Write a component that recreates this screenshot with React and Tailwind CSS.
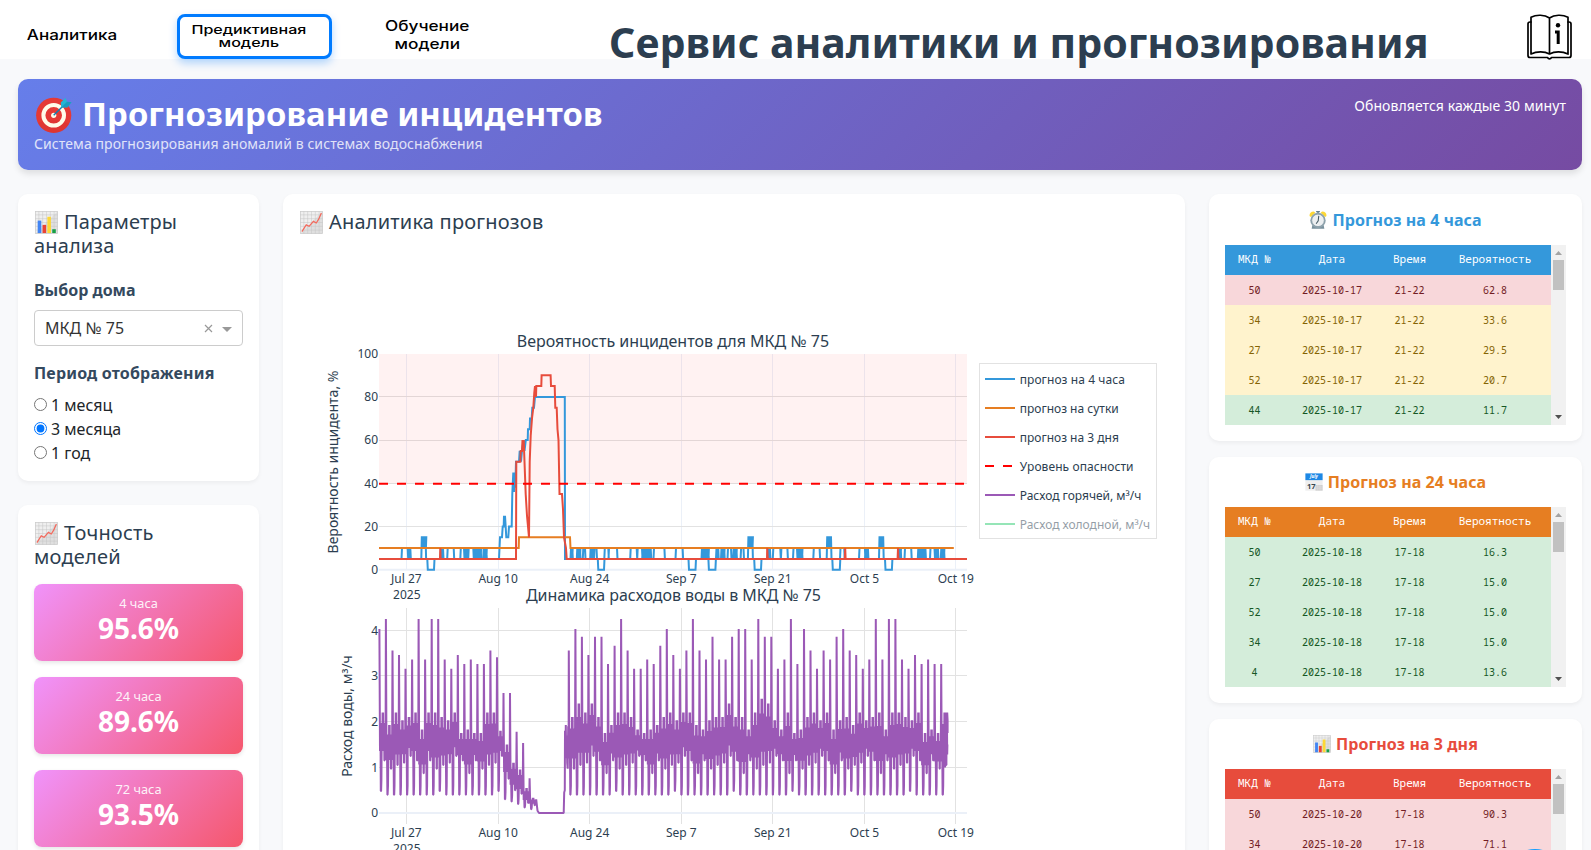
const SANS = "font-['Noto_Sans','Open_Sans',sans-serif]";

/* ---------- probability chart ---------- */
const py = (v) => 569.7 - 2.16 * v;
const ticksX = [
  [406.4, 'Jul 27'], [498.1, 'Aug 10'], [589.7, 'Aug 24'], [681.3, 'Sep 7'],
  [772.8, 'Sep 21'], [864.5, 'Oct 5'], [955.8, 'Oct 19'],
];

// [start, end, level, solid]
const pulses = [
  [402, 407.7, 10], [408.7, 410.3, 10, 1], [421.8, 425.6, 15, 1], [427.8, 434, 0], [441, 443, 10, 1],
  [447.7, 453.7, 10], [460.8, 464, 10], [465, 467.3, 10, 1], [468.7, 473.3, 10], [474.3, 476.7, 10, 1],
  [478, 480.7, 10, 1], [483.7, 486.3, 10, 1],
  'surge',
  [571, 572.3, 10, 1], [577.3, 580, 10, 1], [583.3, 585, 10], [590.7, 593.3, 10, 1], [594.5, 596.5, 10],
  [598.3, 604, 0], [604.8, 608.3, 10], [609, 617, 10], [630.7, 636.7, 10], [637.7, 642, 10],
  [642.7, 646, 10, 1], [647.3, 650.7, 10, 1], [654, 664.4, 10], [676, 682.6, 10], [689, 695.5, 0],
  [702, 705, 10, 1], [705.8, 708.3, 10, 1], [708.9, 715.4, 0], [716.5, 718.2, 10, 1], [721.5, 724.2, 10, 1],
  [728, 731, 10], [733.7, 736.4, 10, 1], [741.1, 743.5, 10], [748.4, 752.4, 15, 1], [754.7, 761, 0],
  [768.2, 769.9, 10, 1], [773.3, 780.3, 10], [781.4, 787.4, 10], [793.5, 797, 10], [798, 802, 10, 1],
  [813.8, 819.6, 10], [827.2, 831, 15, 1], [832.8, 839.8, 0], [840.5, 844.2, 10], [859.5, 864.9, 10],
  [865.5, 867.9, 10, 1], [879.5, 883.2, 15, 1], [885.5, 891.9, 0], [899.3, 900.7, 10, 1], [905, 911.2, 10],
  [918.3, 922, 10, 1], [923, 925.4, 10, 1], [930.5, 934.5, 10], [935.5, 937.9, 10, 1], [941.3, 944, 10, 1],
];
const surge = [
  [499, 5], [500, 15], [502, 15], [502.7, 20], [503.7, 20], [504, 25], [504.8, 20], [505, 25], [506.3, 15],
  [508.3, 15], [509, 20], [511.7, 20], [512.3, 35], [513.3, 45], [514, 36], [514.7, 45], [515.3, 38],
  [516, 50], [518, 50], [519, 50], [519.7, 55], [521, 50], [522, 55], [523.5, 60], [524.5, 55], [525.8, 60],
  [527.7, 60], [528, 65], [529.7, 65], [530, 70], [531.7, 70], [532.3, 75], [534, 75], [535, 80],
  [564.8, 80], [565, 5],
];
const bluePts = [[379, 5]];
pulses.forEach((p) => {
  if (p === 'surge') return bluePts.push(...surge);
  const [a, b, lv, solid] = p;
  const base = lv === 15 ? 10 : 5;
  bluePts.push([a - 0.5, 5], [a, lv]);
  if (solid) for (let x = a + 1; x < b; x += 1.4) bluePts.push([x, lv], [x + 0.3, base], [x + 0.7, lv]);
  bluePts.push([b, lv], [b + 0.5, 5]);
});
bluePts.push([948, 5]);

const redPts = [
  [379, 5], [440, 5], [440.3, 10], [440.6, 5], [516, 5], [516.3, 50], [520.3, 50], [520.7, 55], [522, 55],
  [522.5, 60], [523, 55], [523.7, 60], [524.5, 50], [525.7, 35], [527, 25], [528, 20], [529, 15], [529.7, 50],
  [530.7, 62], [532, 70], [533.3, 75], [534.3, 82], [535, 85], [536, 80], [536.3, 85], [541.3, 85], [541.6, 90],
  [550.6, 90], [551, 85], [554.7, 85], [555.3, 75], [556.7, 75], [557.5, 65], [558.5, 60], [559.5, 35],
  [562, 35], [563, 28], [564, 15], [566, 10], [566.7, 5], [767, 5], [767.2, 10], [767.8, 5], [844.8, 5],
  [845.2, 10], [845.6, 5], [897.6, 5], [898, 10], [898.4, 5], [967, 5],
];
const orangePts = [[379, 10], [518.7, 10], [519, 15], [570, 15], [570.5, 10], [953.8, 10]];
const line = (pts, f) => pts.map(([x, v]) => `${x.toFixed(1)},${f(v).toFixed(1)}`).join(' ');

/* ---------- hot water flow chart ---------- */
const wy = (v) => 813 - 45.67 * v;
const peaks = [
  4.05, 4.27, 3.58, 3.48, 3.18, 3.38, 4.27, 3.38, 4.27, 4.27, 3.38, 3.18, 3.48, 3.28, 3.38, 3.28, 3.28, 3.58,
  3.43, 2.65, 2.65, 1.8, 1.55, 0.78, 0.3, 0, 0, 0, 1.9, 3.58, 4.05, 3.88, 3.48, 3.88, 3.88, 3.28, 3.68, 4.27,
  3.58, 3.18, 3.18, 3.38, 3.28, 3.68, 4.05, 3.48, 3.18, 3.58, 4.27, 3.58, 3.38, 3.88, 3.38, 3.38, 3.88, 4.05,
  4.05, 3.38, 4.27, 3.88, 3.88, 3.18, 3.38, 4.27, 3.28, 4.05, 3.58, 3.18, 3.58, 3.38, 3.88, 4.05, 3.58, 3.48,
  3.18, 3.38, 4.27, 3.38, 4.27, 4.27, 3.38, 3.18, 3.48, 3.28, 3.38, 3.28, 3.28,
];
const highs = [
  2.2, 1.93, 2.2, 2.03, 2.1, 2.2, 1.83, 2.2, 2.2, 2.1, 2.03, 2.2, 1.75, 1.83, 1.75, 1.75, 2.2, 2.2, 1.8, 1.5,
  1.1, 0.95, 0.55, 0.33, 0, 0, 0, 0, 1.93, 2.1, 2.4, 2.2, 2.4, 2.1, 1.75, 1.93, 2.2, 2.2, 2.1, 1.83, 1.75, 1.83,
  1.93, 2.1, 2.2, 2.03, 2.2, 2.2, 1.93, 1.83, 2.03, 2.1, 2.1, 2.4, 2.1, 2.1, 1.83, 2.2, 2.5, 2.4, 2.03, 1.83,
  2.2, 1.75, 1.83, 2.1, 2.2, 2.03, 2.2, 1.83, 2.03, 2.1, 1.93, 2.2, 2.03, 2.1, 2.2, 1.83, 2.2, 2.2, 2.1, 2.03,
  2.2, 1.75, 1.83, 1.75, 2.2,
];
const lows = { 19: [0.3, 0.75], 20: [0.25, 0.5], 21: [0.2, 0.42], 22: [0.12, 0.22], 23: [0.08, 0.17] };
const flow = [];
peaks.forEach((p, k) => {
  const x = 379.4 + 6.532 * k;
  if (k > 24 && k < 28) return;
  if (k === 24) return flow.push([x, 0.3], [537.5, 0.05], [539, 0], [563.7, 0], [564.2, 0.45]);
  if (k === 28) {
    return [[564.8, 0.5], [565, 1.8], [565.4, 1.3], [565.8, 1.93], [566.2, 1.2], [566.7, 1.7], [567.2, 1.1], [567.7, 0.97], [568.2, 1.9], [568.6, 1.3]].forEach((q) => flow.push(q));
  }
  const h = highs[k];
  const [min, low] = lows[k] || [k % 9 === 0 ? 0.48 : 0.4, [1.15, 0.97, 1.05, 1.1, 1.25, 1.15, 0.87][k % 7]];
  const mid = low + (h - low) * 0.2;
  const up = low + (h - low) * 0.78;
  [
    [0, p - 0.02], [0.09, mid], [0.13, up], [0.18, mid], [0.22, min], [0.26, min], [0.31, min * 1.5], [0.34, mid], [0.37, up],
    [0.4, mid], [0.43, up], [0.46, mid], [0.49, h], [0.53, mid], [0.57, h], [0.61, mid], [0.65, up], [0.69, mid],
    [0.72, up], [0.76, low], [0.8, low], [0.83, up], [0.86, mid], [0.89, up], [0.92, mid], [0.95, mid + 0.1 * h],
  ].forEach(([t, v]) => flow.push([x + t * 6.532, v]));
});
flow.push([945, 1], [945.4, 2.2], [945.8, 1.3], [946.3, 2.2], [946.7, 1.7], [947.2, 2.2], [947.6, 2.03], [947.6, 1.75]);

const legend = [
  ['прогноз на 4 часа', '#3498db'], ['прогноз на сутки', '#e67e22'], ['прогноз на 3 дня', '#e74c3c'],
  ['Уровень опасности', '#ff0000'], ['Расход горячей, м³/ч', '#9b59b6'], ['Расход холодной, м³/ч', '#2ecc71'],
];

function Cubic({ text }) {
  const [a, b] = text.split('³');
  if (b === undefined) return text;
  return <>{a}<tspan dy="1.5">³</tspan><tspan dy="-1.5">{b}</tspan></>;
}

function Charts() {
  return (
    <svg className="mt-[6px] block font-['Noto_Sans','Open_Sans',sans-serif]" width="870" height="640" viewBox="299 240 870 640">
      <g stroke="#ebf0f8" strokeWidth="1">
        {ticksX.map(([x]) => <path key={x} d={`M${Math.round(x - 0.5) + 0.5} 354V570`} />)}
      </g>
      <g stroke="#e2e2e2">
        {[20, 40, 60, 80].map((v) => <path key={v} d={`M379 ${Math.floor(py(v)) + 0.5}H967`} />)}
      </g>
      <path d="M379 569.8H967" stroke="#ebf0f8" strokeWidth="2" />
      <rect x="379" y="354" width="588" height="129.5" fill="#ff0000" fillOpacity="0.05" />
      <g fill="none" strokeWidth="2">
        <polyline points={line(bluePts, py)} stroke="#3498db" />
        <polyline points={line(orangePts, py)} stroke="#e67e22" />
        <polyline points={line(redPts, py)} stroke="#e74c3c" />
        <path d="M379 483.7H967" stroke="#ff0000" strokeDasharray="9 9" />
      </g>
      <g stroke="#e2e2e2">
        {ticksX.map(([x]) => <path key={x} d={`M${Math.round(x - 0.5) + 0.5} 608V824`} />)}
        {[1, 2, 3, 4].map((v) => <path key={v} d={`M379 ${Math.floor(wy(v)) + 0.5}H967`} />)}
      </g>
      <path d="M379 813H967" stroke="#ebf0f8" strokeWidth="2" />
      <polyline points={line(flow, wy)} fill="none" stroke="#9b59b6" strokeWidth="2" strokeLinejoin="bevel" />

      <g fill="#2c3e50" fontSize="12">
        {[0, 20, 40, 60, 80, 100].map((v) => <text key={v} x="378" y={py(v) + 4.3} textAnchor="end">{v}</text>)}
        {[0, 1, 2, 3, 4].map((v) => <text key={v} x="378" y={wy(v) + 4.3} textAnchor="end">{v}</text>)}
        {ticksX.map(([x, t]) => (
          <g key={t} textAnchor="middle">
            <text x={x} y="583">{t}</text>
            <text x={x} y="837">{t}</text>
          </g>
        ))}
        <text x="406.8" y="599" textAnchor="middle">2025</text>
        <text x="406.8" y="853" textAnchor="middle">2025</text>
      </g>
      <g fill="#2c3e50" textAnchor="middle" fontSize="16">
        <text x="673" y="347">Вероятность инцидентов для МКД № 75</text>
        <text x="673.5" y="601" textLength="295">Динамика расходов воды в МКД № 75</text>
      </g>
      <g fill="#2c3e50" textAnchor="middle" fontSize="14">
        <text transform="translate(338 462) rotate(-90)" textLength="183">Вероятность инцидента, %</text>
        <text transform="translate(352 716) rotate(-90)"><Cubic text="Расход воды, м³/ч" /></text>
      </g>
      <rect x="979.5" y="363.5" width="177" height="175" fill="#fff" stroke="#e2e2e2" />
      <g fontSize="12" fill="#2c3e50">
        {legend.map(([t, c], i) => (
          <g key={t} opacity={i === 5 ? 0.5 : 1}>
            <path d={`M985 ${379 + 29 * i}H1015`} stroke={c} strokeWidth="2" strokeDasharray={i === 3 ? '9 9' : undefined} />
            <text x="1019.7" y={383.7 + 29 * i} letterSpacing={i === 0 || i === 3 ? 0.08 : 0}><Cubic text={t} /></text>
          </g>
        ))}
      </g>
    </svg>
  );
}

/* ---------- pictograms ---------- */
function SheetGrid() {
  return (
    <>
      <rect x="0.5" y="0.5" width="23" height="23" fill="#efefef" />
      <path d="M0.5 23.500L23.500 0.500V23.500z" fill="#d9d9d9" opacity="0.7" />
      <path d="M4 0V24M8 0V24M12 0V24M16 0V24M20 0V24M0 4H24M0 8H24M0 12H24M0 16H24M0 20H24" stroke="#c4c4c4" strokeWidth="0.5" />
      <rect x="0.5" y="0.5" width="23" height="23" fill="none" stroke="#cccccc" strokeWidth="0.8" />
    </>
  );
}
function BarsIcon({ className }) {
  return (
    <svg className={className} viewBox="0 0 24 24">
      <SheetGrid />
      <path d="M2.800 10H6.600V23H2.800z" fill="#4285f4" />
      <path d="M7.900 14.500H11.600V23H7.900z" fill="#ea4335" />
      <path d="M12.900 6H16.600V23H12.900z" fill="#fdd835" />
      <path d="M18 19H21.700V23H18z" fill="#16a047" />
    </svg>
  );
}
function TrendIcon({ className }) {
  return (
    <svg className={className} viewBox="0 0 24 24">
      <SheetGrid />
      <path d="M2 21.500L6.500 14.500L9.500 16L14 10.800L17 12.500L19.500 8.500L22.300 2" fill="none" stroke="#f4695c" strokeWidth="1.3" />
    </svg>
  );
}
function ClockIcon({ className }) {
  return (
    <svg className={className} viewBox="0 0 24 24">
      <path d="M0.700 6.500Q0.500 1 6.500 0.800L8.500 2.200L2.500 8z" fill="#fdd835" />
      <path d="M23.300 6.500Q23.500 1 17.500 0.800L15.500 2.200L21.500 8z" fill="#fdd835" />
      <path d="M4.500 19H19.500L20.500 23.500H3.500z" fill="#78909c" />
      <circle cx="12" cy="12.500" r="10.300" fill="#90a4ae" />
      <circle cx="12" cy="12.500" r="8.300" fill="#eceff1" stroke="#78909c" strokeWidth="0.8" />
      <path d="M12 0.500V2.500M9.500 0.800H14.500" stroke="#607d8b" strokeWidth="1.800" />
      <path d="M13 6.500L12.300 13L9.500 17" fill="none" stroke="#455a64" strokeWidth="1.400" />
    </svg>
  );
}
function CalendarIcon({ className }) {
  return (
    <svg className={className} viewBox="0 0 24 24">
      <path d="M0.500 9H23.500V23.500H0.500z" fill="#eeeeee" />
      <path d="M14 16H23.500V23.500H14z" fill="#cfcfcf" />
      <path d="M14 18.500H23.500M14 21H23.500M17 16V23.500M20 16V23.500" stroke="#e8e8e8" strokeWidth="0.500" />
      <path d="M0.500 0.500H23.500V9.500H0.500z" fill="#1e88e5" />
      <text x="12" y="7" textAnchor="middle" fontSize="6" fontWeight="700" fontStyle="italic" fill="#fff">July</text>
      <text x="8.500" y="21.300" textAnchor="middle" fontSize="10" fontWeight="700" fill="#37474f">17</text>
    </svg>
  );
}
function TargetIcon({ className }) {
  return (
    <svg className={className} viewBox="0 0 36 36">
      <circle cx="17.700" cy="18.300" r="17.600" fill="#e53935" />
      <path d="M2 26A17.600 17.600 0 0 0 33 27Q18 20 2 26z" fill="#d32f2f" opacity="0.350" />
      <circle cx="17.700" cy="18.300" r="10.300" fill="none" stroke="#fffbe9" strokeWidth="4" />
      <circle cx="17.700" cy="18.300" r="2.600" fill="#fffbe9" />
      <path d="M17.700 18.300L28 8" stroke="#0e7fb5" strokeWidth="1.400" />
      <path d="M25.300 10.500L24.800 5.500L29.500 0.700L31 4.700L35.500 5.300L31.500 10.200z" fill="#26b5d3" />
      <path d="M25.300 10.500L31 4.700L35.500 5.300L31.500 10.200z" fill="#1c9ac0" />
    </svg>
  );
}
function Book() {
  return (
    <svg className="h-[46px] w-[45px]" viewBox="0 0 45 46" fill="none" stroke="#000" strokeWidth="1.7" strokeLinejoin="round" strokeLinecap="round">
      <path d="M22.5 4C17.5 0.6 9.5 0.4 4 3.2V40C10 37 17.5 37.2 22.5 40C27.5 37.2 35 37 41 40V3.2C35.500 0.400 27.500 0.600 22.500 4V40" />
      <path d="M4 8H3C1.700 8 1 8.700 1 10V41.500C1 42.700 1.700 43.500 3 43.500H20.500C21.500 45.300 23.500 45.300 24.500 43.500H42C43.300 43.500 44 42.700 44 41.500V10C44 8.700 43.300 8 42 8H41" />
      <path d="M28 18H31.200V30" strokeWidth="3" strokeLinecap="butt" strokeLinejoin="miter" />
      <circle cx="31" cy="11.300" r="2.200" fill="#000" stroke="none" />
    </svg>
  );
}

/* ---------- forecast tables ---------- */
const tone = {
  r: 'bg-[#f8d7da] text-[#721c24]',
  y: 'bg-[#fff3cd] text-[#856404]',
  g: 'bg-[#d4edda] text-[#155724]',
};
const grid = 'grid h-[30px] grid-cols-[59px_96px_59px_112px] items-center text-center';

function Forecast({ Icon, title, color, head, date, time, rows, box }) {
  return (
    <section className={`shrink-0 rounded-[10px] bg-white px-4 pt-4 shadow-[0_2px_4px_rgba(0,0,0,0.05)] ${box}`}>
      <h3 className={`flex h-[18px] items-center justify-center gap-[5px] text-[16px] leading-[18px] font-bold ${color}`}>
        <Icon className="h-[18px] w-[18px]" />
        <span className="mb-px tracking-[0.08px]">{title}</span>
      </h3>
      <div className="mt-4 flex h-[180px] overflow-hidden font-['Noto_Sans_Mono','Droid_Sans_Mono',monospace]">
        <div className="w-[326px]">
          <div className={`${grid} pb-px text-[11px] text-white ${head}`}>
            <span>МКД №</span><span>Дата</span><span>Время</span><span>Вероятность</span>
          </div>
          {rows.map(([id, p, t]) => (
            <div key={id} className={`${grid} text-[10px] ${tone[t]}`}>
              <span>{id}</span><span>{date}</span><span>{time}</span><span>{p}</span>
            </div>
          ))}
        </div>
        <div className="flex w-[15px] flex-col items-center bg-[#f1f1f1]">
          <svg className="h-[15px] w-[15px]" viewBox="0 0 15 15"><path d="M4 10L7.5 6L11 10z" fill="#a3a3a3" /></svg>
          <div className="h-[30px] w-[11px] bg-[#c1c1c1]" />
          <div className="flex-1" />
          <svg className="h-[15px] w-[15px]" viewBox="0 0 15 15"><path d="M4 5L7.5 9L11 5z" fill="#505050" /></svg>
        </div>
      </div>
    </section>
  );
}

const shadow = 'shadow-[0_2px_4px_rgba(0,0,0,0.05)]';
const inlineIcon = 'mr-[6px] ml-[1px] inline-block h-[23px] w-[23px] align-[-5px]';

export default function App() {
  return (
    <div className={`relative h-[850px] w-[1591px] overflow-hidden bg-[#f8f9fb] text-[#2c3e50] ${SANS}`}>
      <header className="flex h-[59px] bg-white">
        <nav className="flex font-['Inter',sans-serif] text-center text-black">
          <div className="flex h-[59px] w-[144px] items-center justify-center pt-[9px] text-[14px] font-medium">
            <span className="inline-block scale-x-[1.22]">Аналитика</span>
          </div>
          <div className="mt-[14px] ml-[33px] flex h-[45px] w-[155px] items-center justify-center rounded-[8px] border-[3px] border-[#007bff] bg-white pr-[11px] pb-[1px] text-[12px] leading-[13.5px] font-medium shadow-[0_4px_8px_rgba(0,123,255,0.3)]">
            <span className="inline-block scale-x-[1.34]">Предиктивная<br />модель</span>
          </div>
          <div className="mt-[12px] ml-[20px] flex h-[45px] w-[150px] items-center justify-center text-[14px] leading-[18px] font-medium">
            <span className="inline-block scale-x-[1.23]">Обучение<br />модели</span>
          </div>
        </nav>
        <h1 className="ml-[107px] h-[59px] w-[840px] pt-[12px] text-[41px] leading-[60px] font-bold tracking-[0.04px] whitespace-nowrap">Сервис аналитики и прогнозирования</h1>
        <div className="mt-[13.5px] mr-[19px] ml-auto"><Book /></div>
      </header>

      <div className="px-[18px] pt-5 pr-[9px]">
        <div className="flex h-[91px] justify-between rounded-[10px] bg-[linear-gradient(135deg,#667eea_0%,#764ba2_100%)] px-4 pt-4 text-white shadow-[0_4px_6px_rgba(0,0,0,0.1)]">
          <div>
            <h2 className="flex h-[38px] items-center text-[32.8px] leading-[38px] font-bold tracking-[0.06px] whitespace-nowrap">
              <TargetIcon className="mt-px mr-[10px] ml-[2px] h-[36px] w-[36px]" />
              <span>Прогнозирование инцидентов</span>
            </h2>
            <p className="text-[14px] leading-[21px] tracking-[0.09px] opacity-80">Система прогнозирования аномалий в системах водоснабжения</p>
          </div>
          <p className="text-[14px] leading-[21px] tracking-[0.08px]">Обновляется каждые 30 минут</p>
        </div>

        <div className="mt-6 flex">
          <div className="flex w-[241px] flex-col gap-6">
            <section className={`h-[287px] rounded-[10px] bg-white p-4 ${shadow}`}>
              <h3 className="h-12 text-[20px] leading-[24px] tracking-[0.12px]"><BarsIcon className={inlineIcon} />Параметры<br />анализа</h3>
              <div className="mt-5 text-[16px] leading-6 font-bold text-[#34495e]">Выбор дома</div>
              <div className="mt-2 flex h-9 items-center rounded-[4px] border border-[#ccc] pr-[10px] pl-[10px] text-[16px] text-[#333]">
                <span className="flex-1">МКД № 75</span>
                <svg width="9" height="9" viewBox="0 0 9 9" stroke="#999" strokeWidth="1.2"><path d="M1 1L8 8M8 1L1 8" /></svg>
                <svg className="mt-[3px] ml-[9px]" width="10" height="5" viewBox="0 0 10 5"><path d="M0 0H10L5 5z" fill="#999" /></svg>
              </div>
              <div className="mt-[15px] text-[16px] leading-6 font-bold tracking-[0.17px] text-[#34495e]">Период отображения</div>
              <div className="mt-2 text-[16px] leading-6 text-[#212529]">
                {['1 месяц', '3 месяца', '1 год'].map((t, i) => (
                  <label key={t} className="flex h-6 items-center gap-[4px]">
                    <input type="radio" name="period" defaultChecked={i === 1} className="mb-[2px] h-[13px] w-[13px]" />
                    {t}
                  </label>
                ))}
              </div>
            </section>
            <section className={`h-[400px] rounded-[10px] bg-white p-4 ${shadow}`}>
              <h3 className="h-12 text-[20px] leading-[24px] tracking-[0.2px]"><TrendIcon className={inlineIcon} />Точность<br />моделей</h3>
              <div className="mt-[15px] flex flex-col gap-4 text-center text-white">
                {[['4 часа', '95.6%'], ['24 часа', '89.6%'], ['72 часа', '93.5%']].map(([a, b]) => (
                  <div key={a} className="h-[77px] rounded-[8px] bg-[linear-gradient(135deg,#f093fb_0%,#f5576c_100%)] pt-[10px] shadow-[0_2px_4px_rgba(0,0,0,0.1)]">
                    <div className="text-[12.8px] leading-[19px] opacity-90">{a}</div>
                    <div className="text-[28px] leading-[30px] font-bold">{b}</div>
                  </div>
                ))}
              </div>
            </section>
          </div>

          <section className={`ml-6 h-[700px] w-[902px] rounded-[10px] bg-white p-4 ${shadow}`}>
            <h3 className="h-6 text-[20px] leading-[24px] tracking-[0.2px]"><TrendIcon className={inlineIcon} />Аналитика прогнозов</h3>
            <Charts />
          </section>

          <div className="ml-6 flex w-[373px] flex-col gap-4">
            <Forecast Icon={ClockIcon} title="Прогноз на 4 часа" color="text-[#3498db]" head="bg-[#3498db]" box="h-[247px] pt-[17px]" date="2025-10-17" time="21-22"
              rows={[['50', '62.8', 'r'], ['34', '33.6', 'y'], ['27', '29.5', 'y'], ['52', '20.7', 'y'], ['44', '11.7', 'g']]} />
            <Forecast Icon={CalendarIcon} title="Прогноз на 24 часа" color="text-[#e67e22]" head="bg-[#e67e22]" box="h-[246px]" date="2025-10-18" time="17-18"
              rows={[['50', '16.3', 'g'], ['27', '15.0', 'g'], ['52', '15.0', 'g'], ['34', '15.0', 'g'], ['4', '13.6', 'g']]} />
            <Forecast Icon={BarsIcon} title="Прогноз на 3 дня" color="text-[#e74c3c]" head="bg-[#e74c3c]" box="h-[246px]" date="2025-10-20" time="17-18"
              rows={[['50', '90.3', 'r'], ['34', '71.1', 'r']]} />
          </div>
        </div>
      </div>
      <div className="absolute top-[849px] left-[1505px] h-[60px] w-[60px] rounded-full bg-[#119dff]" />
    </div>
  );
}
